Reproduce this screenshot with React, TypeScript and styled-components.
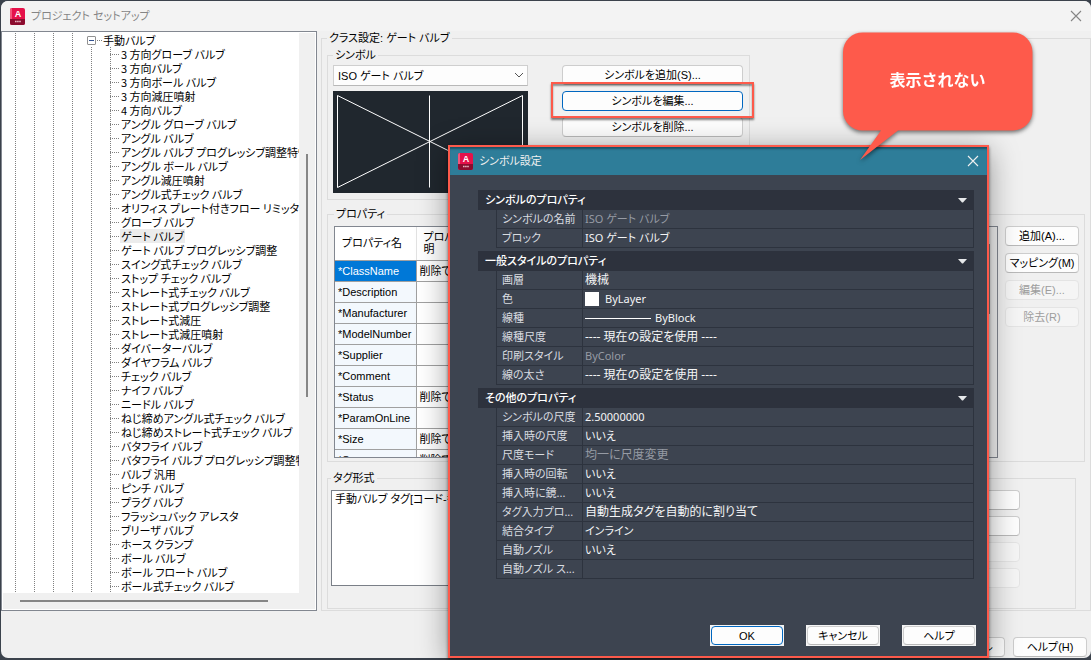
import React from "react";
import styled, { createGlobalStyle, css } from "styled-components";

const GlobalStyle = createGlobalStyle`
  * { box-sizing: border-box; }
  html, body { margin: 0; padding: 0; background: #3b424c; }
  body, button, select, textarea, table {
    font-family: "Liberation Sans", "Noto Sans CJK JP", sans-serif;
    font-size: 11px;
    line-height: 14px;
    font-feature-settings: "palt";
    color: #000;
  }
`;

const Desktop = styled.div`
  position: relative;
  min-height: 100vh;
  padding: 1px 0 2px 1px;
  display: flex;
  overflow: hidden;
`;

const Window = styled.div`
  flex: 1;
  min-width: 0;
  display: flex;
  flex-direction: column;
  background: #f0f0f0;
  border-radius: 7px;
  overflow: hidden;
`;

const TitleBar = styled.header`
  height: 30px;
  padding: 0 8px;
  display: flex;
  align-items: center;
  gap: 6px;
  background: #f3f3f3;
  color: #858585;
`;

const WindowTitle = styled.h1`
  flex: 1;
  margin: 0;
  font-size: 11px;
  font-weight: 400;
`;

const CloseButton = styled.button`
  width: 14px;
  height: 14px;
  padding: 0;
  border: 0;
  background: none;
  color: inherit;
  display: flex;
  align-items: center;
  justify-content: center;
`;

const Workspace = styled.div`
  display: flex;
  gap: 4px;
  align-items: stretch;
`;

const TreePanel = styled.nav`
  width: 316px;
  flex: none;
  display: grid;
  grid-template-columns: 1fr 16px;
  grid-template-rows: 1fr 16px;
  border: 1px solid #828790;
  background: #fff;
  padding: 1px;
  font-family: "Noto Sans CJK JP", sans-serif;
`;

const TreeView = styled.div`
  display: flex;
  overflow: hidden;
`;

const dottedColumn = css`
  background-image: linear-gradient(#808080 50%, transparent 50%);
  background-size: 1px 2px;
  background-repeat: repeat-y;
`;

const Guide = styled.span`
  width: 19px;
  flex: none;
  ${dottedColumn}
  background-position: 12px 0;
`;

const TreeBody = styled.div`
  flex: 1;
  min-width: 0;
  display: flex;
  flex-direction: column;
  overflow: hidden;
`;

const RootRow = styled.div`
  height: 14px;
  display: flex;
  align-items: center;
  gap: 1px;
  padding-left: 8px;
  white-space: nowrap;
`;

const Expander = styled.button`
  width: 9px;
  height: 9px;
  padding: 0;
  border: 1px solid #919191;
  border-radius: 1px;
  background: #fff;
  display: flex;
  align-items: center;
  justify-content: center;

  &::before {
    content: "";
    width: 5px;
    height: 1px;
    background: #33518f;
  }
`;

const Dots = styled.span`
  width: 5px;
  flex: none;
  border-top: 1px dotted #808080;
`;

const RootBody = styled.div`
  flex: 1;
  display: flex;
`;

const TreeList = styled.ul`
  flex: 1;
  min-width: 0;
  margin: 0 0 0 12px;
  padding: 0;
  list-style: none;
  ${dottedColumn}
  overflow: hidden;
`;

const TreeItem = styled.li`
  height: 14px;
  display: flex;
  align-items: center;
  gap: 1px;
  white-space: nowrap;

  &::before {
    content: "";
    width: 9px;
    flex: none;
    border-top: 1px dotted #808080;
  }
`;

const ItemLabel = styled.span<{ $selected?: boolean }>`
  padding: 0 1px;
  line-height: 14px;
  background: ${(p) => (p.$selected ? "#ececec" : "transparent")};
`;

const ScrollTrack = styled.div<{ $horizontal?: boolean }>`
  background: #f0f0f0;
  ${(p) =>
    p.$horizontal
      ? css`
          grid-column: 1 / 3;
          padding: 7px 47px 7px 17px;
        `
      : css`
          padding: 121px 7px 196px;
        `}
`;

const ScrollThumb = styled.div`
  width: 100%;
  height: 100%;
  background: #868686;
`;

const Group = styled.fieldset<{ $pad: string; $margin?: string; $width?: string }>`
  min-width: 0;
  margin: ${(p) => p.$margin ?? "0"};
  padding: ${(p) => p.$pad};
  width: ${(p) => p.$width ?? "auto"};
  border: 1px solid #dcdcdc;
`;

const SettingsGroup = styled(Group)`
  flex: 1;
`;

const GroupTitle = styled.legend`
  padding: 0 2px;
  line-height: 14px;
`;

const GroupRow = styled.div<{ $gap: number }>`
  display: flex;
  align-items: stretch;
  gap: ${(p) => p.$gap}px;
`;

const Stack = styled.div<{ $gap: number }>`
  display: flex;
  flex-direction: column;
  gap: ${(p) => p.$gap}px;
`;

const SelectBox = styled.label`
  position: relative;
  display: block;
  width: 195px;

  svg {
    position: absolute;
    right: 4px;
    top: 7px;
    pointer-events: none;
  }
`;

const SymbolSelect = styled.select`
  width: 100%;
  height: 21px;
  padding: 0 4px;
  appearance: none;
  border: 1px solid #cfcfcf;
  border-bottom-color: #b8b8b8;
  background: #fdfdfd;
`;

const Preview = styled.svg`
  display: block;
  width: 195px;
  height: 102px;
  background: #20272e;
`;

const PushButton = styled.button<{ $primary?: boolean; $wide?: boolean }>`
  flex: none;
  width: ${(p) => (p.$wide ? "181px" : "74px")};
  height: 20px;
  padding: 0;
  border: 1px solid ${(p) => (p.$primary ? "#0067c0" : "#cdcdcd")};
  border-bottom-color: ${(p) => (p.$primary ? "#0067c0" : "#b9b9b9")};
  border-radius: 4px;
  background: #fdfdfd;
  white-space: nowrap;

  &:disabled {
    color: #9d9d9d;
    border-color: #e4e4e4;
    background: #f5f5f5;
  }
`;

const Highlighted = styled.div`
  position: relative;
  display: flex;

  &::after {
    content: "";
    position: absolute;
    inset: -9px -11px -7px;
    border: 2px solid #fd5a4b;
    box-shadow: 0 2px 2px rgba(0, 0, 0, 0.5), inset 0 2px 2px rgba(0, 0, 0, 0.4);
    pointer-events: none;
  }
`;

const GridFrame = styled.div`
  flex: 1;
  min-width: 0;
  height: 232px;
  display: flex;
  overflow: hidden;
  border: 1px solid #828790;
  background: #fff;
`;

const PropertyGrid = styled.table`
  flex: 1;
  border-collapse: collapse;
  table-layout: fixed;

  th, td {
    height: 21px;
    padding: 0 3px;
    border-right: 1px solid #a0a0a0;
    border-bottom: 1px solid #a0a0a0;
    text-align: left;
    font-weight: 400;
    white-space: nowrap;
  }
  thead th {
    height: 33px;
    padding: 0 7px;
    line-height: 12px;
    border-right-color: #e2e2e2;
  }
`;

const NameHead = styled.th`
  width: 81px;
`;

const NameCell = styled.th<{ $selected?: boolean }>`
  background: ${(p) => (p.$selected ? "#0078d7" : "#f3f8fd")};
  color: ${(p) => (p.$selected ? "#fff" : "#000")};
`;

const GridScroll = styled.div`
  width: 17px;
  flex: none;
  padding: 17px 7px 143px;
  background: #f0f0f0;
`;

const TagText = styled.textarea`
  flex: 1;
  min-width: 0;
  height: 96px;
  padding: 1px 3px;
  resize: none;
  border: 1px solid #7a7f87;
  background: #fff;
`;

const Footer = styled.footer`
  flex: 1;
  display: flex;
  justify-content: flex-end;
  align-items: flex-end;
  gap: 8px;
  padding: 0 4px 1px;
`;

const Dialog = styled.section`
  position: absolute;
  left: 448px;
  top: 145px;
  width: 541px;
  display: flex;
  flex-direction: column;
  border: 2px solid #fd5a4b;
  background: #3d4450;
  color: #f0f0f0;
  font-family: "Noto Sans", "Noto Sans CJK JP", sans-serif;
  box-shadow: 0 6px 28px rgba(0, 0, 0, 0.4), 0 2px 3px rgba(0, 0, 0, 0.5);
`;

const DialogBar = styled.header`
  height: 28px;
  padding: 0 7px;
  display: flex;
  align-items: center;
  gap: 6px;
  background: #2e7d99;
  box-shadow: inset 0 3px 2px -1px #1b5367;
`;

const DialogTitle = styled.h2`
  flex: 1;
  margin: 0;
  font-size: 11px;
  font-weight: 400;
`;

const DialogBody = styled.div`
  padding: 15px 13px 0 28px;
  display: flex;
  flex-direction: column;
  gap: 3px;
`;

const SectionHead = styled.button`
  display: flex;
  width: 100%;
  height: 20px;
  align-items: center;
  justify-content: space-between;
  padding: 0 7px;
  border: 0;
  background: #2d323d;
  color: #fff;
  font-weight: 500;
`;

const PropTable = styled.table`
  width: calc(100% - 18px);
  margin-left: 18px;
  table-layout: fixed;
  border-collapse: separate;
  border-spacing: 0;
  border-left: 1px solid #2d333e;
  font-family: "Noto Sans", "Noto Sans CJK JP", sans-serif;
`;

const PropName = styled.th`
  width: 86px;
  height: 19px;
  padding: 0 0 0 5px;
  white-space: nowrap;
  text-align: left;
  font-weight: 400;
  color: #d9dce0;
  border-right: 1px solid #2d333e;
  border-bottom: 1px solid #2d333e;
`;

const PropValue = styled.td<{ $muted?: boolean; $large?: boolean }>`
  height: 19px;
  padding: 0 2px;
  white-space: nowrap;
  font-size: ${(p) => (p.$large ? "12px" : "11px")};
  color: ${(p) => (p.$muted ? "#969ba4" : "#f4f5f6")};
  border-right: 1px solid #2d333e;
  border-bottom: 1px solid #2d333e;
`;

const ValueRow = styled.span<{ $gap: number }>`
  display: flex;
  align-items: center;
  gap: ${(p) => p.$gap}px;
`;

const Swatch = styled.span`
  width: 14px;
  height: 14px;
  background: #fff;
`;

const LineSample = styled.span`
  width: 66px;
  height: 1px;
  background: #fff;
`;

const DialogActions = styled.div`
  display: flex;
  justify-content: flex-end;
  gap: 22px;
  padding: 46px 11px 10px;
`;

const DialogButton = styled(PushButton)`
  height: 19px;
  width: 72px;
`;

const ButtonPlate = styled.span`
  padding: 1px;
  background: #f4f4f4;
  display: flex;
`;

const Callout = styled.aside`
  position: absolute;
  left: 842px;
  top: 32px;
  width: 191px;
  height: 130px;
  filter: drop-shadow(0 2px 2px rgba(0, 0, 0, 0.55));

  svg { position: absolute; inset: 0; }
`;

const CalloutText = styled.p`
  position: relative;
  margin: 0;
  line-height: 94px;
  text-align: center;
  color: #fff;
  font-family: "Noto Sans CJK JP", sans-serif;
  font-feature-settings: normal;
  font-size: 16px;
  font-weight: 700;
`;

const AppIcon = () => (
  <svg width="16" height="17" viewBox="0 0 16 17" aria-hidden="true">
    <rect x="1" y="0" width="15" height="17" rx="2" fill="#e5114a" />
    <path d="M1 2a2 2 0 0 1 2-2v17a2 2 0 0 1-2-2z" fill="#f2557a" />
    <path d="M1 11h15v4a2 2 0 0 1-2 2H3a2 2 0 0 1-2-2z" fill="#8b0c2e" />
    <text x="9" y="9" textAnchor="middle" fontFamily="Liberation Sans" fontWeight="700" fontSize="9" fill="#fff">A</text>
    <path d="M6 13.500h6" stroke="#e7b6c2" strokeWidth="1.400" strokeDasharray="1.6 .5" />
  </svg>
);

const Cross = () => (
  <svg width="12" height="12" viewBox="0 0 12 12" aria-hidden="true">
    <path d="M1 1l10 10M11 1L1 11" stroke="currentColor" strokeWidth="1.1" />
  </svg>
);

const items = [
  "3 方向グローブ バルブ", "3 方向バルブ", "3 方向ボール バルブ", "3 方向減圧噴射", "4 方向バルブ",
  "アングル グローブ バルブ", "アングル バルブ", "アングル バルブ プログレッシブ調整特性", "アングル ボール バルブ",
  "アングル減圧噴射", "アングル式チェック バルブ", "オリフィス プレート付きフロー リミッタ", "グローブ バルブ",
  "ゲート バルブ", "ゲート バルブ プログレッシブ調整", "スイング式チェック バルブ", "ストップ チェック バルブ",
  "ストレート式チェック バルブ", "ストレート式プログレッシブ調整", "ストレート式減圧", "ストレート式減圧噴射",
  "ダイバーターバルブ", "ダイヤフラム バルブ", "チェック バルブ", "ナイフ バルブ", "ニードル バルブ",
  "ねじ締めアングル式チェック バルブ", "ねじ締めストレート式チェック バルブ", "バタフライ バルブ",
  "バタフライ バルブ プログレッシブ調整特性", "バルブ 汎用", "ピンチ バルブ", "プラグ バルブ",
  "フラッシュバック アレスタ", "ブリーザ バルブ", "ホース クランプ", "ボール バルブ", "ボール フロート バルブ",
  "ボール式チェック バルブ",
];

const gridRows: [string, string][] = [
  ["*ClassName", "削除できない"], ["*Description", ""], ["*Manufacturer", ""], ["*ModelNumber", ""],
  ["*Supplier", ""], ["*Comment", ""], ["*Status", "削除できない"], ["*ParamOnLine", ""],
  ["*Size", "削除できない"], ["*Spec", "削除できない"],
];

type Prop = { name: string; value: React.ReactNode; muted?: boolean; large?: boolean };

const sections: { title: string; props: Prop[] }[] = [
  {
    title: "シンボルのプロパティ",
    props: [
      { name: "シンボルの名前", value: "ISO ゲート バルブ", muted: true },
      { name: "ブロック", value: "ISO ゲート バルブ" },
    ],
  },
  {
    title: "一般スタイルのプロパティ",
    props: [
      { name: "画層", value: "機械", large: true },
      { name: "色", value: <ValueRow $gap={6}><Swatch />ByLayer</ValueRow> },
      { name: "線種", value: <ValueRow $gap={4}><LineSample />ByBlock</ValueRow> },
      { name: "線種尺度", value: "---- 現在の設定を使用 ----", large: true },
      { name: "印刷スタイル", value: "ByColor", muted: true },
      { name: "線の太さ", value: "---- 現在の設定を使用 ----", large: true },
    ],
  },
  {
    title: "その他のプロパティ",
    props: [
      { name: "シンボルの尺度", value: "2.50000000" },
      { name: "挿入時の尺度", value: "いいえ" },
      { name: "尺度モード", value: "均一に尺度変更", muted: true, large: true },
      { name: "挿入時の回転", value: "いいえ" },
      { name: "挿入時に鏡...", value: "いいえ" },
      { name: "タグ入力プロ...", value: "自動生成タグを自動的に割り当て", large: true },
      { name: "結合タイプ", value: "インライン" },
      { name: "自動ノズル", value: "いいえ" },
      { name: "自動ノズル ス...", value: "" },
    ],
  },
];

const ClassTree = () => (
  <TreePanel aria-label="クラス">
    <TreeView>
      <Guide /><Guide /><Guide /><Guide />
      <TreeBody>
        <RootRow>
          <Expander aria-label="手動バルブを折りたたむ" />
          <Dots />
          <span>手動バルブ</span>
        </RootRow>
        <RootBody>
          <Guide />
          <TreeList>
            {items.map((name) => (
              <TreeItem key={name}>
                <ItemLabel $selected={name === "ゲート バルブ"}>{name}</ItemLabel>
              </TreeItem>
            ))}
          </TreeList>
        </RootBody>
      </TreeBody>
    </TreeView>
    <ScrollTrack><ScrollThumb /></ScrollTrack>
    <ScrollTrack $horizontal><ScrollThumb /></ScrollTrack>
  </TreePanel>
);

const SymbolDialog = () => (
  <Dialog role="dialog" aria-labelledby="dialog-title">
    <DialogBar>
      <AppIcon />
      <DialogTitle id="dialog-title">シンボル設定</DialogTitle>
      <CloseButton aria-label="閉じる"><Cross /></CloseButton>
    </DialogBar>
    <DialogBody>
      {sections.map((section) => (
        <div key={section.title}>
          <SectionHead>
            {section.title}
            <svg width="9" height="5" viewBox="0 0 9 5" aria-hidden="true">
              <path d="M0 0h9L5 4.500H4z" fill="#e6e8ea" />
            </svg>
          </SectionHead>
          <PropTable>
            <tbody>
              {section.props.map((prop) => (
                <tr key={prop.name}>
                  <PropName scope="row">{prop.name}</PropName>
                  <PropValue $muted={prop.muted} $large={prop.large}>{prop.value}</PropValue>
                </tr>
              ))}
            </tbody>
          </PropTable>
        </div>
      ))}
    </DialogBody>
    <DialogActions>
      <ButtonPlate><DialogButton $primary>OK</DialogButton></ButtonPlate>
      <ButtonPlate><DialogButton>キャンセル</DialogButton></ButtonPlate>
      <ButtonPlate><DialogButton>ヘルプ</DialogButton></ButtonPlate>
    </DialogActions>
  </Dialog>
);

export default function App() {
  return (
    <Desktop>
      <GlobalStyle />
      <Window>
        <TitleBar>
          <AppIcon />
          <WindowTitle>プロジェクト セットアップ</WindowTitle>
          <CloseButton aria-label="閉じる"><Cross /></CloseButton>
        </TitleBar>
        <Workspace>
          <ClassTree />
          <SettingsGroup $pad="3px 5px 1px">
            <GroupTitle>クラス設定: ゲート バルブ</GroupTitle>
            <Group $pad="3px 5px 6px" $width="423px">
              <GroupTitle>シンボル</GroupTitle>
              <GroupRow $gap={34}>
                <Stack $gap={5}>
                  <SelectBox>
                    <SymbolSelect aria-label="シンボル">
                      <option>ISO ゲート バルブ</option>
                    </SymbolSelect>
                    <svg width="10" height="7" viewBox="0 0 10 7" aria-hidden="true">
                      <path d="M1 1l4 4 4-4" fill="none" stroke="#555" />
                    </svg>
                  </SelectBox>
                  <Preview viewBox="0 0 195 102" aria-hidden="true">
                    <path d="M4.500 4.500v92L189.500 4.500v92zM96.500 4.500v92" fill="none" stroke="#fff" />
                  </Preview>
                </Stack>
                <Stack $gap={6}>
                  <PushButton $wide>シンボルを追加(S)...</PushButton>
                  <Highlighted><PushButton $wide $primary>シンボルを編集...</PushButton></Highlighted>
                  <PushButton $wide>シンボルを削除...</PushButton>
                </Stack>
              </GroupRow>
            </Group>
            <Group $pad="5px 5px 3px 6px" $margin="7px 0 0">
              <GroupTitle>プロパティ</GroupTitle>
              <GroupRow $gap={7}>
                <GridFrame>
                  <PropertyGrid>
                    <thead>
                      <tr>
                        <NameHead scope="col">プロパティ名</NameHead>
                        <th scope="col">プロパティの説<br />明</th>
                      </tr>
                    </thead>
                    <tbody>
                      {gridRows.map(([name, note], i) => (
                        <tr key={name}>
                          <NameCell scope="row" $selected={i === 0}>{name}</NameCell>
                          <td>{note}</td>
                        </tr>
                      ))}
                    </tbody>
                  </PropertyGrid>
                  <GridScroll><ScrollThumb /></GridScroll>
                </GridFrame>
                <Stack $gap={7}>
                  <PushButton>追加(A)...</PushButton>
                  <PushButton>マッピング(M)</PushButton>
                  <PushButton disabled>編集(E)...</PushButton>
                  <PushButton disabled>除去(R)</PushButton>
                </Stack>
              </GroupRow>
            </Group>
            <Group $pad="5px 55px 20px 3px" $margin="9px 9px 0 0">
              <GroupTitle>タグ形式</GroupTitle>
              <GroupRow $gap={7}>
                <TagText aria-label="タグ形式" defaultValue="手動バルブ タグ[コード-番号]" />
                <Stack $gap={6}>
                  <PushButton aria-label="新規" />
                  <PushButton aria-label="変更" />
                  <PushButton aria-label="削除" disabled />
                  <PushButton aria-label="選択" disabled />
                </Stack>
              </GroupRow>
            </Group>
          </SettingsGroup>
        </Workspace>
        <Footer>
          <PushButton>キャンセル</PushButton>
          <PushButton>ヘルプ(H)</PushButton>
        </Footer>
      </Window>
      <SymbolDialog />
      <Callout>
        <svg width="191" height="130" viewBox="0 0 191 130" aria-hidden="true">
          <path d="M21 0.500H171a19.500 19.500 0 0 1 19.500 19.500V79a19.500 19.500 0 0 1-19.500 19.500H56L18 128 39 98.500H21A19.500 19.500 0 0 1 1 79V20A19.500 19.500 0 0 1 21 .500z" fill="#fe5a4b" />
        </svg>
        <CalloutText>表示されない</CalloutText>
      </Callout>
    </Desktop>
  );
}
